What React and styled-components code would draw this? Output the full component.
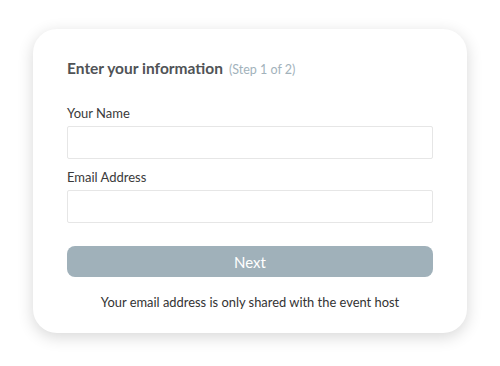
import React from 'react'
import styled, { createGlobalStyle } from 'styled-components'

const GlobalStyle = createGlobalStyle`
    body {
        margin: 0;
        background: #ffffff;
        font-family: Lato, "Noto Sans", sans-serif;
    }
`

const Page = styled.div`
    width: 500px;
    height: 366px;
    padding: 29px 33px 0;
    box-sizing: border-box;
`

const Card = styled.div`
    width: 434px;
    height: 304px;
    box-sizing: border-box;
    background: #ffffff;
    border-radius: 24px;
    box-shadow: 0 4px 16px rgba(0, 0, 0, 0.16);
    padding: 30px 34px 0;
    display: flex;
    flex-direction: column;
`

const Heading = styled.div`
    display: flex;
    align-items: baseline;
    gap: 6px;
    margin-bottom: 28px;
`

const Title = styled.h1`
    margin: 0;
    font-size: 15.5px;
    font-weight: 700;
    color: #505356;
`

const Step = styled.span`
    font-size: 12.5px;
    color: #a2b2bb;
`

const Field = styled.div`
    display: flex;
    flex-direction: column;
    gap: 5px;
    margin-bottom: ${props => props.gap}px;
`

const Label = styled.label`
    font-size: 13px;
    color: #3a3a3a;
`

const Input = styled.input`
    height: 33px;
    box-sizing: border-box;
    border: 1px solid #e6e6e6;
    border-radius: 2px;
    outline: none;
    padding: 0 10px;
    font: inherit;
`

const Button = styled.button`
    height: 31px;
    border: none;
    border-radius: 8px;
    background: #a0b1ba;
    color: #ffffff;
    font-family: inherit;
    font-size: 15px;
    cursor: pointer;
`

const Note = styled.p`
    margin: 17px 0 0;
    text-align: center;
    font-size: 12.9px;
    color: #333333;
`

const App = () => (
    <Page>
        <GlobalStyle />
        <Card>
            <Heading>
                <Title>Enter your information</Title>
                <Step>(Step 1 of 2)</Step>
            </Heading>
            <Field gap={10}>
                <Label>Your Name</Label>
                <Input type="text" />
            </Field>
            <Field gap={23}>
                <Label>Email Address</Label>
                <Input type="email" />
            </Field>
            <Button>Next</Button>
            <Note>Your email address is only shared with the event host</Note>
        </Card>
    </Page>
)

export default App
